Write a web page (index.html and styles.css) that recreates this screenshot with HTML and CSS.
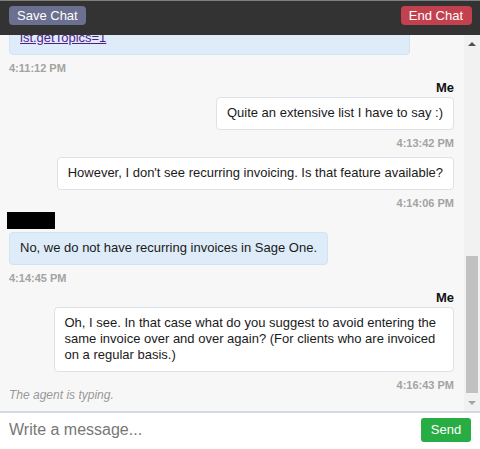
FILE: index.html
```html
<!DOCTYPE html>
<html lang="en">
<head>
<meta charset="utf-8">
<title>Chat</title>
<link rel="stylesheet" href="styles.css">
</head>
<body>
<div class="app">
  <header class="topbar">
    <button class="btn btn-save" type="button">Save Chat</button>
    <button class="btn btn-end" type="button">End Chat</button>
  </header>
  <main class="chat">
    <div class="pane">
      <div class="log">
        <div class="msg agent">
          <div class="bubble bubble-cut"><a class="link" href="#">ist.getTopics=1</a></div>
          <div class="time">4:11:12 PM</div>
        </div>
        <div class="msg me named">
          <div class="name">Me</div>
          <div class="bubble">Quite an extensive list I have to say :)</div>
          <div class="time">4:13:42 PM</div>
        </div>
        <div class="msg me cont">
          <div class="bubble">However, I don't see recurring invoicing. Is that feature available?</div>
          <div class="time">4:14:06 PM</div>
        </div>
        <div class="msg agent">
          <div class="name redacted"></div>
          <div class="bubble">No, we do not have recurring invoices in Sage One.</div>
          <div class="time">4:14:45 PM</div>
        </div>
        <div class="msg me named">
          <div class="name">Me</div>
          <div class="bubble">Oh, I see. In that case what do you suggest to avoid entering the same invoice over and over again? (For clients who are invoiced on a regular basis.)</div>
          <div class="time">4:16:43 PM</div>
        </div>
      </div>
      <div class="typing">The agent is typing.</div>
    </div>
    <div class="scrollbar">
      <div class="arrow-box"><span class="arrow-up"></span></div>
      <div class="track"><div class="thumb"></div></div>
      <div class="arrow-box"><span class="arrow-down"></span></div>
    </div>
  </main>
  <footer class="composer">
    <input class="input" type="text" placeholder="Write a message...">
    <button class="btn btn-send" type="button">Send</button>
  </footer>
</div>
</body>
</html>
```

FILE: styles.css
```css
* { box-sizing: border-box; }

html, body {
  margin: 0;
  padding: 0;
}

body {
  font-family: "Liberation Sans", Arial, sans-serif;
  color: #222;
  background: #fff;
}

.app {
  width: 480px;
  height: 449px;
  display: flex;
  flex-direction: column;
  overflow: hidden;
}

.topbar {
  height: 35px;
  flex: none;
  background: #333333;
  border-top: 1px solid #7f7f7f;
  display: flex;
  justify-content: space-between;
  align-items: flex-start;
  padding: 5px 8px 0 9px;
  position: relative;
  z-index: 1;
}

.btn {
  border: none;
  margin: 0;
  color: #fff;
  font-family: "Liberation Sans", Arial, sans-serif;
  font-size: 13px;
  cursor: pointer;
}

.btn-save,
.btn-end {
  height: 19px;
  line-height: 19px;
  padding: 0 8px;
  border-radius: 4px;
}

.btn-save { background: #6b6f90; }
.btn-end { background: #c3414f; padding: 0 9px 0 8px; }

.chat {
  flex: 1;
  min-height: 0;
  display: flex;
  background: #f7f7f7;
}

.pane {
  flex: 1;
  min-width: 0;
  display: flex;
  flex-direction: column;
  overflow: hidden;
}

.log {
  flex: 1;
  min-height: 0;
  display: flex;
  flex-direction: column;
  justify-content: flex-end;
  padding: 0 10px 0 9px;
}

.msg {
  display: flex;
  flex-direction: column;
  flex: none;
}

.msg + .msg { margin-top: 8px; }
.msg + .msg.named { margin-top: 7px; }
.msg + .msg.cont { margin-top: 9px; }

.msg.me { align-items: flex-end; }
.msg.agent { align-items: flex-start; }

.bubble {
  max-width: 90%;
  padding: 7px 10px 8px;
  font-size: 13px;
  line-height: 16px;
  border-radius: 4px;
  border: 1px solid #dde2e8;
  background: #fff;
  color: #1a1a1a;
}

.agent .bubble {
  background: #ddecf8;
  border-color: #d2e2ef;
}

.bubble-cut {
  width: 90%;
  padding-top: 30px;
}

.link {
  color: #551a8b;
  text-decoration: underline;
}

.name {
  font-size: 13px;
  font-weight: bold;
  line-height: 15px;
  margin-bottom: 2px;
  color: #111;
}

.redacted {
  width: 48px;
  height: 17px;
  background: #000;
  margin: -4px 0 3px -2px;
}

.time {
  margin-top: 8px;
  font-size: 11px;
  font-weight: bold;
  line-height: 10px;
  color: #a3a3a3;
}

.typing {
  flex: none;
  height: 21px;
  padding: 0 9px 11px;
  font-size: 12px;
  font-style: italic;
  line-height: 10px;
  color: #999;
}

.scrollbar {
  width: 16px;
  flex: none;
  background: #f1f1f1;
  display: flex;
  flex-direction: column;
}

.arrow-box {
  height: 17px;
  flex: none;
  display: flex;
  align-items: center;
  justify-content: center;
}

.arrow-up {
  width: 0;
  height: 0;
  border-left: 4px solid transparent;
  border-right: 4px solid transparent;
  border-bottom: 4px solid #505050;
}

.arrow-down {
  width: 0;
  height: 0;
  border-left: 4px solid transparent;
  border-right: 4px solid transparent;
  border-top: 4px solid #a3a3a3;
}

.track {
  flex: 1;
  display: flex;
  flex-direction: column;
  justify-content: flex-end;
}

.thumb {
  height: 137px;
  margin: 0 2px 1px;
  background: #c1c1c1;
}

.composer {
  height: 38px;
  flex: none;
  border-top: 2px solid #d2d9e0;
  background: #fff;
  display: flex;
  align-items: flex-start;
  padding: 5px 9px 0 9px;
  gap: 8px;
}

.input {
  flex: 1;
  min-width: 0;
  height: 24px;
  border: none;
  outline: none;
  padding: 0;
  margin: 0;
  background: transparent;
  font-family: "Liberation Sans", Arial, sans-serif;
  font-size: 16px;
  color: #333;
}

.input::placeholder { color: #777; }

.btn-send {
  width: 50px;
  height: 24px;
  line-height: 24px;
  padding: 0;
  border-radius: 3px;
  background: #28ad45;
}
```
